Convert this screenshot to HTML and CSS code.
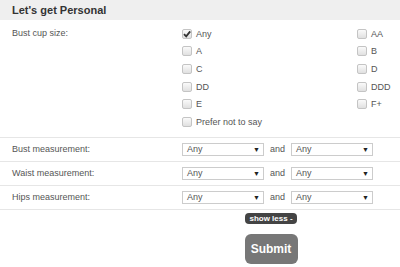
FILE: index.html
```html
<!DOCTYPE html>
<html lang="en">
<head>
  <meta charset="UTF-8">
  <title>Let's get Personal</title>
  <link rel="stylesheet" href="styles.css">
</head>
<body>
  <div class="panel">
    <div class="panel-head">Let's get Personal</div>

    <div class="row cup-row">
      <div class="label">Bust cup size:</div>
      <div class="cup-grid">
        <label class="opt"><span class="box checked"><svg viewBox="0 0 10 10" width="10" height="10"><path d="M2 5.2 L4.2 7.4 L8.2 2.4" fill="none" stroke="#333" stroke-width="1.8"/></svg></span>Any</label>
        <label class="opt"><span class="box"></span>AA</label>
        <label class="opt"><span class="box"></span>A</label>
        <label class="opt"><span class="box"></span>B</label>
        <label class="opt"><span class="box"></span>C</label>
        <label class="opt"><span class="box"></span>D</label>
        <label class="opt"><span class="box"></span>DD</label>
        <label class="opt"><span class="box"></span>DDD</label>
        <label class="opt"><span class="box"></span>E</label>
        <label class="opt"><span class="box"></span>F+</label>
        <label class="opt"><span class="box"></span>Prefer not to say</label>
      </div>
    </div>

    <div class="row range-row">
      <div class="label">Bust measurement:</div>
      <div class="range">
        <div class="select">Any<span class="arrow">▼</span></div>
        <span class="and">and</span>
        <div class="select">Any<span class="arrow">▼</span></div>
      </div>
    </div>

    <div class="row range-row">
      <div class="label">Waist measurement:</div>
      <div class="range">
        <div class="select">Any<span class="arrow">▼</span></div>
        <span class="and">and</span>
        <div class="select">Any<span class="arrow">▼</span></div>
      </div>
    </div>

    <div class="row range-row">
      <div class="label">Hips measurement:</div>
      <div class="range">
        <div class="select">Any<span class="arrow">▼</span></div>
        <span class="and">and</span>
        <div class="select">Any<span class="arrow">▼</span></div>
      </div>
    </div>

    <div class="actions">
      <button class="toggle">show less -</button>
      <button class="submit">Submit</button>
    </div>
  </div>
</body>
</html>
```

FILE: styles.css
```css
body {
  margin: 0;
  background: #fff;
  font-family: "Liberation Sans", Arial, sans-serif;
  font-size: 9px;
  color: #555;
}
.panel-head {
  height: 20px;
  line-height: 20px;
  padding: 0 12px;
  background: #efefef;
  color: #333;
  font-weight: bold;
  font-size: 11px;
}
.row {
  display: grid;
  grid-template-columns: 170px 1fr;
  padding-left: 12px;
  border-bottom: 1px solid #e6e6e6;
}
.cup-row {
  padding-top: 5px;
  padding-bottom: 6px;
}
.label {
  line-height: 17.6px;
}
.cup-grid {
  display: grid;
  grid-template-columns: 175px 1fr;
  grid-auto-rows: 17.6px;
}
.opt {
  display: flex;
  align-items: center;
  gap: 4px;
}
.box {
  width: 8px;
  height: 8px;
  border: 1px solid #c4c4c4;
  border-radius: 2px;
  background: linear-gradient(#fafafa, #e0e0e0);
  display: flex;
  align-items: center;
  justify-content: center;
}
.box svg {
  display: block;
  flex: none;
}
.range-row {
  height: 23px;
  align-items: center;
}
.range-row .label {
  line-height: 23px;
}
.range {
  display: flex;
  align-items: center;
}
.select {
  width: 73px;
  height: 11px;
  line-height: 11px;
  padding: 0 3px 0 4px;
  border: 1px solid #ccc;
  font-size: 9px;
  display: flex;
  justify-content: space-between;
  color: #555;
}
.arrow {
  font-size: 7px;
  color: #222;
}
.and {
  margin: 0 6px;
}
.actions {
  width: 178px;
  margin-left: 182px;
  padding-top: 3px;
  display: flex;
  flex-direction: column;
  align-items: center;
}
.toggle {
  height: 11px;
  padding: 0 4px;
  border: none;
  border-radius: 4px;
  background: #444;
  color: #fff;
  font-family: "Liberation Sans", Arial, sans-serif;
  font-size: 8px;
  font-weight: bold;
  line-height: 11px;
}
.submit {
  margin-top: 10px;
  width: 53px;
  height: 30px;
  border: none;
  border-radius: 6px;
  background: #777;
  color: #fff;
  font-family: "Liberation Sans", Arial, sans-serif;
  font-size: 12px;
  font-weight: bold;
  padding: 0;
}
```
